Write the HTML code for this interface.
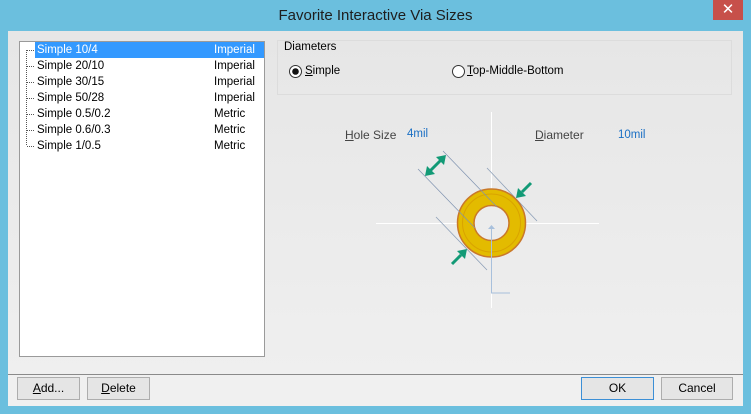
<!DOCTYPE html>
<html><head><style>
*{margin:0;padding:0;box-sizing:border-box}
body{width:751px;height:414px;background:#6bbfde;font-family:"Liberation Sans",sans-serif;font-size:11.5px;color:#000;position:relative;overflow:hidden}
.abs{position:absolute}
.title{left:0;width:751px;top:7px;text-align:center;font-size:15px;color:#1e1e1e}
.close{left:713px;top:0;width:30px;height:20px;background:#c7504a;color:#fff;text-align:center;font-size:15px;line-height:20px}
.client{left:8px;top:31px;width:735px;height:375px;background:#f0f0f0}
.top{left:8px;top:31px;width:735px;height:343px;background:linear-gradient(#e6e6e6,#efefef)}
.sep{left:8px;top:374px;width:735px;height:1px;background:#8a8a8a}
.list{left:19px;top:41px;width:246px;height:316px;background:#fff;border:1px solid #9a9a9a}
.row{position:absolute;left:35px;width:229px;height:16px;line-height:16px;padding-left:2px}
.row span{position:absolute;left:179px}
.sel{background:#3399ff;color:#fff}
.btn{position:absolute;top:377px;height:23px;border:1px solid #adadad;background:#e5e5e5;text-align:center;line-height:21px;font-size:12px}
u{text-decoration:underline}
.blue{color:#1a6fc4}
.lbl{color:#444;font-size:12px}
</style></head><body>
<div class="abs title">Favorite Interactive Via Sizes</div>
<div class="abs close">✕</div>
<div class="abs client"></div>
<div class="abs top"></div>
<div class="abs sep"></div>
<div class="abs list"></div>
<svg class="abs" style="left:0;top:0" width="751" height="414">
<g stroke="#555" stroke-dasharray="1,1" stroke-width="1">
<line x1="26.5" y1="50" x2="26.5" y2="146"/>
<line x1="27" y1="50.5" x2="35" y2="50.5"/><line x1="27" y1="66.5" x2="35" y2="66.5"/><line x1="27" y1="82.5" x2="35" y2="82.5"/><line x1="27" y1="98.5" x2="35" y2="98.5"/><line x1="27" y1="114.5" x2="35" y2="114.5"/><line x1="27" y1="130.5" x2="35" y2="130.5"/><line x1="27" y1="146.5" x2="35" y2="146.5"/>
</g>
<rect x="277.5" y="40.5" width="454" height="54" fill="none" stroke="#dcdcdc"/>
<rect x="283" y="41" width="60" height="3" fill="#e6e6e6"/>
<line x1="491.5" y1="112" x2="491.5" y2="308" stroke="#fff"/>
<line x1="376" y1="223.5" x2="599" y2="223.5" stroke="#fff"/>
<g stroke="#8ea0b8" stroke-width="0.8">
<line x1="487" y1="168" x2="537" y2="221"/>
<line x1="436" y1="217" x2="487" y2="270"/>
</g>
<circle cx="491.5" cy="223" r="34" fill="#e3bb00" stroke="#c9782a" stroke-width="1.5"/>
<circle cx="491.5" cy="223" r="29" fill="none" stroke="#d9a300" stroke-width="1"/>
<circle cx="491.5" cy="223" r="17.5" fill="#ececec" stroke="#c9782a" stroke-width="1.5"/>
<g stroke="#7f93b0" stroke-width="0.7">
<line x1="418" y1="169" x2="475" y2="228"/>
<line x1="443" y1="151" x2="497" y2="207"/>
</g>
<polyline points="491.5,228 491.5,293 510,293" fill="none" stroke="#a8c0dc"/>
<polygon points="488,229 491.5,225 495,229" fill="#a8c0dc"/>
<g stroke="#129a76" stroke-width="3" fill="#129a76">
<line x1="430" y1="171" x2="441" y2="160"/>
<polygon points="425,176 427,166 435,174" stroke="none"/>
<polygon points="446,155 436,157 444,165" stroke="none"/>
<line x1="531" y1="183" x2="522" y2="192"/>
<polygon points="516,198 518,188 526,196" stroke="none"/>
<line x1="452" y1="264" x2="461" y2="255"/>
<polygon points="467,249 457,251 465,259" stroke="none"/>
</g>
<circle cx="295.5" cy="71.5" r="6" fill="#fff" stroke="#333"/>
<circle cx="295.5" cy="71.5" r="3.3" fill="#111"/>
<circle cx="458.5" cy="71.5" r="6" fill="#fff" stroke="#333"/>
</svg>
<div class="row sel" style="top:42px">Simple 10/4<span>Imperial</span></div>
<div class="row" style="top:58px">Simple 20/10<span>Imperial</span></div>
<div class="row" style="top:74px">Simple 30/15<span>Imperial</span></div>
<div class="row" style="top:90px">Simple 50/28<span>Imperial</span></div>
<div class="row" style="top:106px">Simple 0.5/0.2<span>Metric</span></div>
<div class="row" style="top:122px">Simple 0.6/0.3<span>Metric</span></div>
<div class="row" style="top:138px">Simple 1/0.5<span>Metric</span></div>
<div class="abs" style="left:284px;top:41px">Diameters</div>
<div class="abs" style="left:305px;top:65px"><u>S</u>imple</div>
<div class="abs" style="left:467px;top:65px"><u>T</u>op-Middle-Bottom</div>
<div class="abs lbl" style="left:345px;top:128px"><u>H</u>ole Size</div>
<div class="abs blue" style="left:407px;top:128px">4mil</div>
<div class="abs lbl" style="left:535px;top:128px"><u>D</u>iameter</div>
<div class="abs blue" style="left:618px;top:129px">10mil</div>
<div class="btn" style="left:17px;width:63px"><u>A</u>dd...</div>
<div class="btn" style="left:87px;width:63px"><u>D</u>elete</div>
<div class="btn" style="left:581px;width:73px;border-color:#3c8fd6">OK</div>
<div class="btn" style="left:661px;width:72px">Cancel</div>
</body></html>
